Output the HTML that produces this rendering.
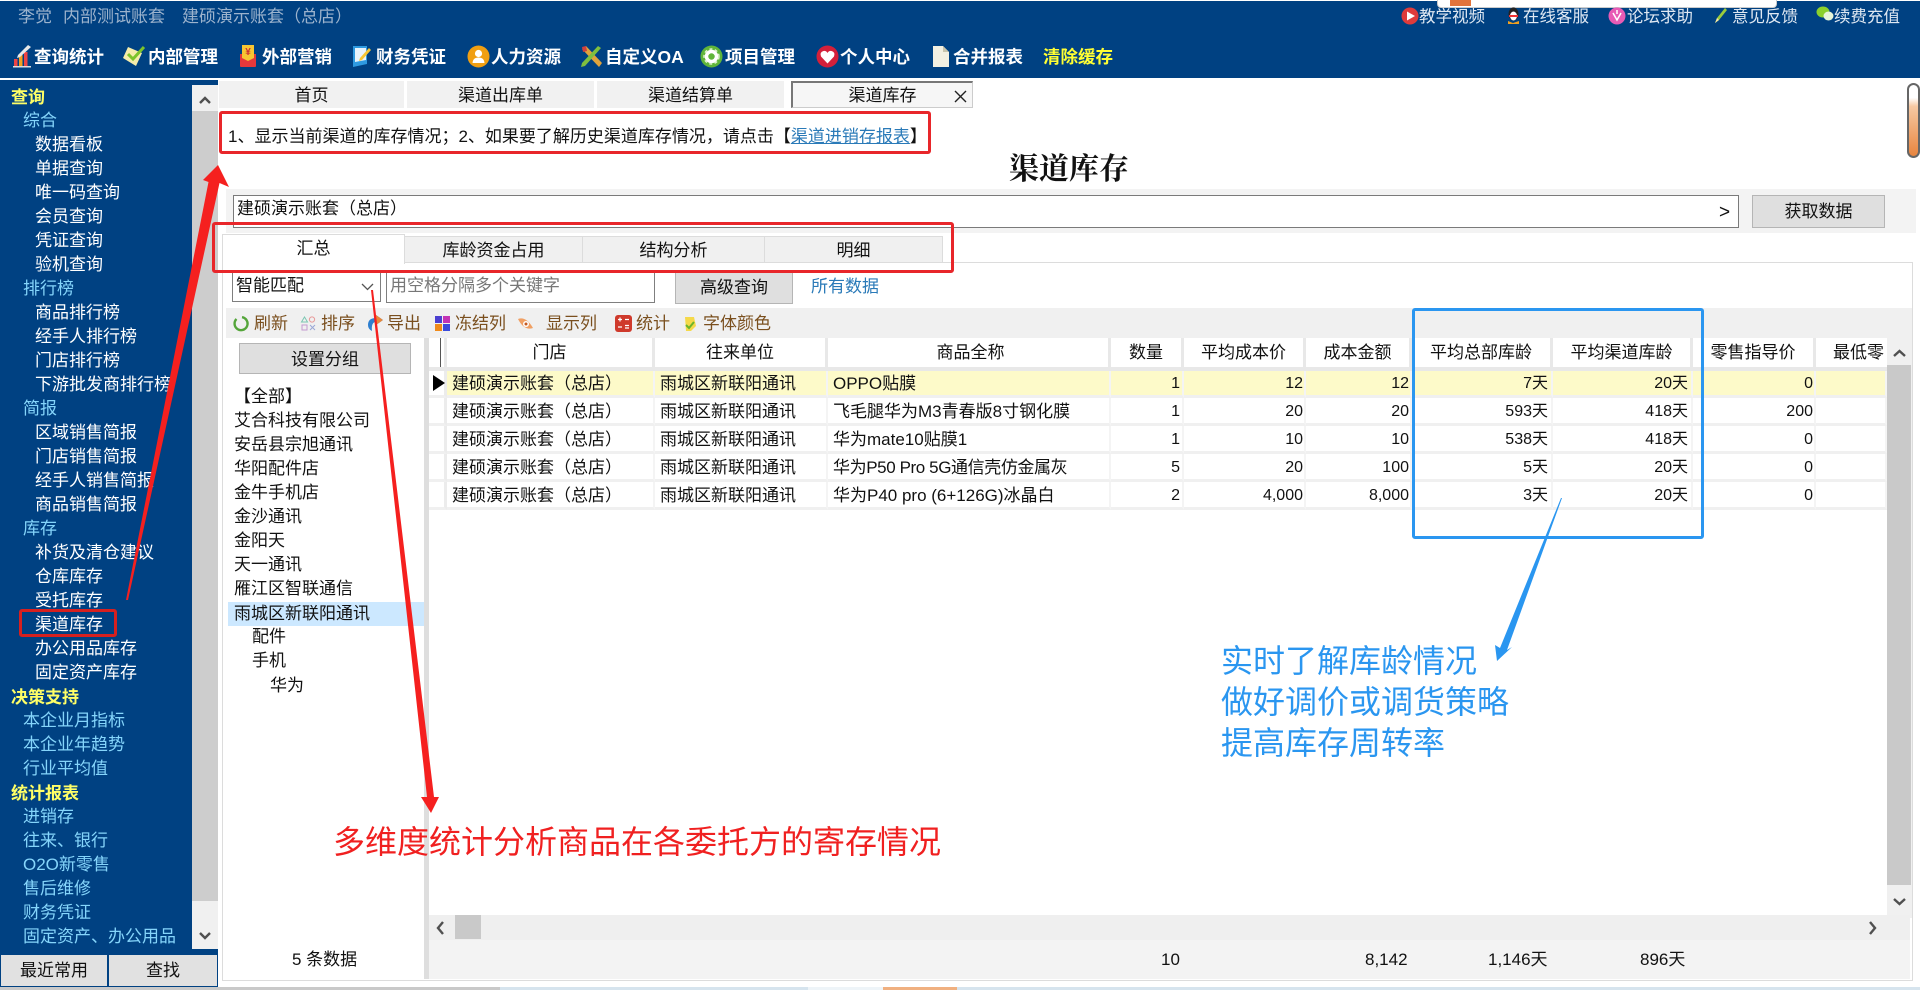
<!DOCTYPE html>
<html lang="zh-CN">
<head>
<meta charset="utf-8">
<title>渠道库存</title>
<style>
*{box-sizing:border-box;margin:0;padding:0}
html,body{width:1920px;height:990px;overflow:hidden;background:#fff}
body{position:relative;font-family:"Liberation Sans","Noto Sans CJK SC",sans-serif;font-size:17px;color:#111}
.a{position:absolute}
.t{position:absolute;white-space:nowrap;line-height:24px;height:24px}
.c{text-align:center}
svg.i{position:absolute;overflow:visible}
#side{position:absolute;left:0;top:85px;width:192px;color:#fff;line-height:24px;white-space:nowrap}
#side div{height:24px;padding-left:35px}
#side .l1{padding-left:11px;color:#ffff66;font-weight:700;position:relative;top:1px}
#side .l2{padding-left:23px;color:#85d5fb}
.nav{color:#fff;font-weight:700;top:45px;font-size:17.5px}
.tr{color:#dfe8f2;top:5px;font-size:16.5px}
.tab{position:absolute;top:81px;height:27px;background:#f1f1f1;text-align:center;line-height:29px}
.tb2{position:absolute;top:236px;height:27px;background:#f0f0f0;border:1px solid #dcdcdc;border-left:0;text-align:center;line-height:28px}
.bn{position:absolute;background:#dfdfdf;border:1px solid #b5b5b5;text-align:center}
.tool{color:#7a4f1e;top:312px}
.g{left:234px}
table{position:absolute;left:429px;top:338px;width:1458px;border-collapse:separate;border-spacing:0;table-layout:fixed;font-size:17px}
th{font-weight:400;height:33px;background:#fff;border-bottom:4px solid #e8e8e8;border-right:3px solid #e8e8e8;padding:0;text-align:center;line-height:26px;white-space:nowrap;overflow:hidden}
td{height:28px;border-bottom:3px solid #f0f0f0;border-right:2px solid #f4f4f4;padding:2px 4px 0 5px;white-space:nowrap;overflow:hidden;line-height:23px}
tr.y td{background:#fdfac9;height:27px;line-height:22px}
td.n{text-align:right;font-size:16px}
td.p2{padding-right:2px}
td.p1{padding-right:1px}
td.p3{padding-right:3px}
td.ind,tr.y td.ind{background:#fff;border-right:3px solid #ececec;padding:0}
.s{position:absolute;background:#c9c9c9}
.f{top:948px}
</style>
</head>
<body>
<!-- header -->
<div class="a" style="left:0;top:1px;width:1920px;height:77px;background:#004182"></div>
<div class="a" style="left:1437px;top:0;width:340px;height:8px;background:#fff;border:1px solid #ccc;border-top:0;border-radius:0 0 4px 4px"></div>
<div class="a" style="left:1450px;top:0;width:21px;height:6px;background:#e2733a"></div>
<div class="t" style="left:18px;top:5px;color:#9cb3cd">李觉</div>
<div class="t" style="left:63px;top:5px;color:#9cb3cd">内部测试账套</div>
<div class="t" style="left:182px;top:5px;color:#9cb3cd">建硕演示账套（总店）</div>

<!-- top right -->
<svg class="i" style="left:1401px;top:7px" width="18" height="20" viewBox="0 0 18 20"><circle cx="9" cy="9" r="8.5" fill="#df3b3b"/><path d="M6 4.500L14 9L6 13.500Z" fill="#fff"/></svg>
<div class="t tr" style="left:1419px">教学视频</div>
<svg class="i" style="left:1506px;top:6px" width="15" height="20" viewBox="0 0 15 20"><ellipse cx="7.500" cy="8" rx="5" ry="6.500" fill="#222"/><ellipse cx="7.500" cy="10" rx="3.500" ry="4.500" fill="#fff"/><path d="M3 9L12 9L12 11L3 11Z" fill="#e33"/><path d="M2 15L7 17L13 15L13 18L2 18Z" fill="#f0a020"/></svg>
<div class="t tr" style="left:1523px">在线客服</div>
<svg class="i" style="left:1608px;top:7px" width="18" height="18" viewBox="0 0 18 18"><circle cx="9" cy="9" r="8.500" fill="#e85bb5"/><path d="M5 6L9 13L13 6M9 3V7" stroke="#fff" stroke-width="1.500" fill="none"/></svg>
<div class="t tr" style="left:1627px">论坛求助</div>
<svg class="i" style="left:1714px;top:7px" width="14" height="18" viewBox="0 0 14 18"><path d="M11 1L13 3L5 13L1 16L3 11Z" fill="#9bcb3c"/><path d="M1 16L3 11L5 13Z" fill="#f5e6a8"/></svg>
<div class="t tr" style="left:1732px">意见反馈</div>
<svg class="i" style="left:1816px;top:6px" width="18" height="16" viewBox="0 0 18 16"><ellipse cx="7" cy="6" rx="6.500" ry="5.500" fill="#8bd02c"/><ellipse cx="12.500" cy="10" rx="5" ry="4.500" fill="#e8f5d8"/></svg>
<div class="t tr" style="left:1834px">续费充值</div>

<!-- nav -->
<svg class="i" style="left:12px;top:44px" width="20" height="24" viewBox="0 0 20 24"><path d="M1 22H19V23.500H1Z" fill="#ddd"/><rect x="2" y="15" width="3.500" height="7" fill="#e44"/><rect x="7" y="11" width="3.500" height="11" fill="#f4a020"/><rect x="12" y="8" width="3.500" height="14" fill="#e44"/><path d="M16 1L19 3L8 13L5 14L6 11Z" fill="#e8e8e8"/></svg>
<div class="t nav" style="left:34px">查询统计</div>
<svg class="i" style="left:122px;top:45px" width="24" height="22" viewBox="0 0 24 22"><path d="M6 2L20 8L14 21L1 13Z" fill="#f5ecaa"/><path d="M6 9L11 14L22 2" stroke="#7cc42a" stroke-width="3" fill="none"/></svg>
<div class="t nav" style="left:148px">内部管理</div>
<svg class="i" style="left:238px;top:44px" width="20" height="24" viewBox="0 0 20 24"><path d="M2 10H18V22Q18 23 17 23H3Q2 23 2 22Z" fill="#e5383b"/><path d="M4 1H16V14L10 17L4 14Z" fill="#f8c632"/><text x="10" y="11" font-size="10" text-anchor="middle" fill="#c33" font-weight="700">¥</text></svg>
<div class="t nav" style="left:262px">外部营销</div>
<svg class="i" style="left:352px;top:45px" width="20" height="23" viewBox="0 0 20 23"><path d="M1 1H15V19L1 22Z" fill="#2f9ae0"/><path d="M3 3H14V15L3 17Z" fill="#e8f3fb"/><path d="M17 3L19 5L10 15L7 16L8 13Z" fill="#f6c533"/></svg>
<div class="t nav" style="left:376px">财务凭证</div>
<svg class="i" style="left:467px;top:45px" width="23" height="23" viewBox="0 0 23 23"><circle cx="11.500" cy="11.500" r="11" fill="#f09f12"/><circle cx="11.500" cy="8.500" r="3.600" fill="#fff"/><path d="M5.500 18Q6 12.500 11.500 12.500Q17 12.500 17.500 18Z" fill="#fff"/></svg>
<div class="t nav" style="left:491px">人力资源</div>
<svg class="i" style="left:580px;top:45px" width="23" height="23" viewBox="0 0 23 23"><path d="M2 4L6 1L22 18L19 22Z" fill="#e0a33c"/><path d="M21 3L18 1L2 18L1 22L5 21Z" fill="#7fbf3f"/><path d="M2 2L6 1L7 6L3 7Z" fill="#cf3f3f"/></svg>
<div class="t nav" style="left:605px">自定义OA</div>
<svg class="i" style="left:700px;top:45px" width="23" height="23" viewBox="0 0 23 23"><circle cx="11.500" cy="11.500" r="11" fill="#5fb53a"/><circle cx="11.500" cy="11.500" r="5" fill="none" stroke="#fff" stroke-width="3.500"/><circle cx="11.500" cy="11.500" r="7.500" fill="none" stroke="#dff3cf" stroke-width="1.500" stroke-dasharray="3 2.500"/></svg>
<div class="t nav" style="left:725px">项目管理</div>
<svg class="i" style="left:816px;top:45px" width="23" height="23" viewBox="0 0 23 23"><circle cx="11.500" cy="11.500" r="11" fill="#d4203a"/><path d="M11.500 18.500L5 11.500Q3.500 7 7.500 6Q10 5.500 11.500 8Q13 5.500 15.500 6Q19.500 7 18 11.500Z" fill="#fff"/></svg>
<div class="t nav" style="left:840px">个人中心</div>
<svg class="i" style="left:931px;top:45px" width="19" height="23" viewBox="0 0 19 23"><path d="M2 1H12L18 7V22H2Z" fill="#f3f0e2"/><path d="M12 1V7H18Z" fill="#c9c5ad"/></svg>
<div class="t nav" style="left:953px">合并报表</div>
<div class="t nav" style="left:1043px;color:#ffff33">清除缓存</div>

<!-- sidebar -->
<div class="a" style="left:0;top:80px;width:218px;height:907px;background:#004182"></div>
<div class="a" style="left:192px;top:85px;width:26px;height:864px;background:#cdcdcd"></div>
<div class="a" style="left:192px;top:85px;width:26px;height:26px;background:#f0f0f0"></div>
<div class="a" style="left:192px;top:901px;width:26px;height:48px;background:#f0f0f0"></div>
<svg class="i" style="left:199px;top:96px" width="12" height="8"><path d="M1 7L6 2L11 7" fill="none" stroke="#505050" stroke-width="2.400"/></svg>
<svg class="i" style="left:199px;top:932px" width="12" height="8"><path d="M1 1L6 6L11 1" fill="none" stroke="#505050" stroke-width="2.400"/></svg>
<div id="side">
<div class="l1">查询</div>
<div class="l2">综合</div>
<div>数据看板</div><div>单据查询</div><div>唯一码查询</div><div>会员查询</div><div>凭证查询</div><div>验机查询</div>
<div class="l2">排行榜</div>
<div>商品排行榜</div><div>经手人排行榜</div><div>门店排行榜</div><div>下游批发商排行榜</div>
<div class="l2">简报</div>
<div>区域销售简报</div><div>门店销售简报</div><div>经手人销售简报</div><div>商品销售简报</div>
<div class="l2">库存</div>
<div>补货及清仓建议</div><div>仓库库存</div><div>受托库存</div><div>渠道库存</div><div>办公用品库存</div><div>固定资产库存</div>
<div class="l1">决策支持</div>
<div class="l2">本企业月指标</div><div class="l2">本企业年趋势</div><div class="l2">行业平均值</div>
<div class="l1">统计报表</div>
<div class="l2">进销存</div><div class="l2">往来、银行</div><div class="l2">O2O新零售</div><div class="l2">售后维修</div><div class="l2">财务凭证</div><div class="l2">固定资产、办公用品</div>
</div>
<div class="a c" style="left:1px;top:955px;width:106px;height:31px;background:#e1e1e1;line-height:31px">最近常用</div>
<div class="a c" style="left:109px;top:955px;width:108px;height:31px;background:#e1e1e1;line-height:31px">查找</div>

<!-- page tabs -->
<div class="tab" style="left:219px;width:185px">首页</div>
<div class="tab" style="left:407px;width:187px">渠道出库单</div>
<div class="tab" style="left:597px;width:187px">渠道结算单</div>
<div class="tab" style="left:791px;width:182px;background:#f6f6f6;border-top:2px solid #777;border-left:2px solid #777;border-right:1px solid #ccc;border-bottom:1px solid #ccc;line-height:26px">渠道库存</div>
<svg class="i" style="left:954px;top:90px" width="13" height="13"><path d="M1 1L12 12M12 1L1 12" stroke="#222" stroke-width="1.400"/></svg>

<!-- hint -->
<div class="t" style="left:228px;top:125px">1、显示当前渠道的库存情况；2、如果要了解历史渠道库存情况，请点击【<span style="color:#2a7ab8;text-decoration:underline">渠道进销存报表</span>】</div>
<div class="t c" style="left:900px;top:151px;width:338px;height:38px;line-height:38px;font-family:'Liberation Serif','Noto Serif CJK SC',serif;font-size:30px;font-weight:700;color:#111">渠道库存</div>

<!-- account bar -->
<div class="a" style="left:226px;top:189px;width:1690px;height:44px;background:#f3f3f3"></div>
<div class="a" style="left:233px;top:195px;width:1506px;height:33px;background:#fff;border:1px solid #7a7a7a"></div>
<div class="t" style="left:237px;top:197px">建硕演示账套（总店）</div>
<div class="t" style="left:1719px;top:201px;font-size:19px">&gt;</div>
<div class="bn" style="left:1752px;top:195px;width:133px;height:33px;line-height:31px">获取数据</div>

<!-- panel -->
<div class="a" style="left:222px;top:262px;width:1691px;height:719px;border:1px solid #dcdcdc;background:#fff"></div>
<div class="a c" style="left:222px;top:234px;width:183px;height:30px;background:#fff;border:1px solid #dcdcdc;border-bottom:0;line-height:28px">汇总</div>
<div class="tb2" style="left:405px;width:178px">库龄资金占用</div>
<div class="tb2" style="left:583px;width:182px">结构分析</div>
<div class="tb2" style="left:765px;width:178px">明细</div>

<!-- filter -->
<div class="a" style="left:232px;top:272px;width:149px;height:30px;border:1px solid #7f7f7f;background:#fff"></div>
<div class="t" style="left:236px;top:274px">智能匹配</div>
<svg class="i" style="left:361px;top:283px" width="13" height="8"><path d="M1 1L6.500 6.500L12 1" fill="none" stroke="#555" stroke-width="1.300"/></svg>
<div class="a" style="left:386px;top:272px;width:269px;height:31px;border:1px solid #7f7f7f;background:#fff"></div>
<div class="t" style="left:390px;top:274px;color:#777">用空格分隔多个关键字</div>
<div class="bn" style="left:675px;top:270px;width:118px;height:34px;line-height:34px">高级查询</div>
<div class="t" style="left:811px;top:275px;color:#2a7ab8">所有数据</div>

<!-- toolbar -->
<div class="a" style="left:226px;top:308px;width:1686px;height:30px;background:#f0f0f0"></div>
<svg class="i" style="left:233px;top:315px" width="16" height="17" viewBox="0 0 16 17"><path d="M9 2.200A6.500 6.500 0 1 1 3.500 4" fill="none" stroke="#54a53a" stroke-width="2.400"/></svg>
<div class="t tool" style="left:254px">刷新</div>
<svg class="i" style="left:301px;top:316px" width="15" height="15" viewBox="0 0 15 15"><path d="M3.500 1L6.500 6H.5Z" fill="none" stroke="#7cc6b2"/><circle cx="11" cy="3.500" r="2.600" fill="none" stroke="#e89a9a"/><rect x="1" y="9" width="5" height="5" fill="none" stroke="#c39ad0"/><path d="M9 9L14 14M14 9L9 14" stroke="#9aa7d6"/></svg>
<div class="t tool" style="left:321px">排序</div>
<svg class="i" style="left:367px;top:315px" width="16" height="17" viewBox="0 0 16 17"><path d="M1 10Q1 3 9 3V0L16 5L9 10V7Q4 7 5 16Q1 14 1 10Z" fill="#2e7fd0"/><path d="M9 0L16 5L9 10Z" fill="#e8883a"/></svg>
<div class="t tool" style="left:387px">导出</div>
<svg class="i" style="left:435px;top:316px" width="15" height="15"><rect width="7" height="7" fill="#4b3fd0"/><rect x="8" width="7" height="7" fill="#c233b5"/><rect y="8" width="7" height="7" fill="#f08a1a"/><rect x="8" y="8" width="7" height="7" fill="#3a4bdc"/></svg>
<div class="t tool" style="left:455px">冻结列</div>
<svg class="i" style="left:518px;top:316px" width="16" height="15" viewBox="0 0 16 15"><path d="M0 3Q8 0 15 12Q6 15 0 3Z" fill="#f0a064"/><circle cx="8" cy="8" r="3" fill="#fff"/><circle cx="8" cy="8" r="1.500" fill="#c55a22"/></svg>
<div class="t tool" style="left:546px">显示列</div>
<svg class="i" style="left:615px;top:315px" width="17" height="17"><rect width="17" height="17" rx="3" fill="#cf3a2c"/><path d="M3 4.500H7M5 2.500V6.500M10 4.500H14M3 12H7M10 10.500H14M10 13H14" stroke="#fff" stroke-width="1.200"/></svg>
<div class="t tool" style="left:636px">统计</div>
<svg class="i" style="left:683px;top:316px" width="14" height="16" viewBox="0 0 14 16"><path d="M2 1H11L13 10L8 15H3Z" fill="#f5d94a"/><path d="M3 9L6 12L11 6" stroke="#6bb52c" stroke-width="2" fill="none"/></svg>
<div class="t tool" style="left:703px">字体颜色</div>

<!-- group list -->
<div class="bn" style="left:239px;top:343px;width:172px;height:31px;line-height:31px">设置分组</div>
<div class="a" style="left:228px;top:602px;width:196px;height:24px;background:#cce8ff"></div>
<div class="t" style="left:234px;top:385px">【全部】</div>
<div class="t g" style="top:409px">艾合科技有限公司</div>
<div class="t g" style="top:433px">安岳县宗旭通讯</div>
<div class="t g" style="top:457px">华阳配件店</div>
<div class="t g" style="top:481px">金牛手机店</div>
<div class="t g" style="top:505px">金沙通讯</div>
<div class="t g" style="top:529px">金阳天</div>
<div class="t g" style="top:553px">天一通讯</div>
<div class="t g" style="top:577px">雁江区智联通信</div>
<div class="t g" style="top:602px">雨城区新联阳通讯</div>
<div class="t" style="left:252px;top:625px">配件</div>
<div class="t" style="left:252px;top:649px">手机</div>
<div class="t" style="left:270px;top:674px">华为</div>
<div class="t" style="left:292px;top:948px">5 条数据</div>
<div class="a" style="left:424px;top:338px;width:5px;height:641px;background:#dedede"></div>

<!-- grid -->
<table>
<colgroup><col style="width:18px"><col style="width:208px"><col style="width:173px"><col style="width:283px"><col style="width:73px"><col style="width:122px"><col style="width:106px"><col style="width:141px"><col style="width:140px"><col style="width:123px"><col style="width:71px"></colgroup>
<tr><th></th><th>门店</th><th>往来单位</th><th style="padding-left:5px">商品全称</th><th>数量</th><th>平均成本价</th><th>成本金额</th><th>平均总部库龄</th><th>平均渠道库龄</th><th>零售指导价</th><th style="text-align:left;padding-left:17px;border-right:0">最低零</th></tr>
<tr class="y"><td class="ind"></td><td>建硕演示账套（总店）</td><td>雨城区新联阳通讯</td><td>OPPO贴膜</td><td class="n p2">1</td><td class="n p1">12</td><td class="n p1">12</td><td class="n p3">7天</td><td class="n p3">20天</td><td class="n p1">0</td><td></td></tr>
<tr><td class="ind"></td><td>建硕演示账套（总店）</td><td>雨城区新联阳通讯</td><td>飞毛腿华为M3青春版8寸钢化膜</td><td class="n p2">1</td><td class="n p1">20</td><td class="n p1">20</td><td class="n p3">593天</td><td class="n p3">418天</td><td class="n p1">200</td><td></td></tr>
<tr><td class="ind"></td><td>建硕演示账套（总店）</td><td>雨城区新联阳通讯</td><td>华为mate10贴膜1</td><td class="n p2">1</td><td class="n p1">10</td><td class="n p1">10</td><td class="n p3">538天</td><td class="n p3">418天</td><td class="n p1">0</td><td></td></tr>
<tr><td class="ind"></td><td>建硕演示账套（总店）</td><td>雨城区新联阳通讯</td><td><span style="letter-spacing:-.4px">华为P50 Pro 5G通信壳仿金属灰</span></td><td class="n p2">5</td><td class="n p1">20</td><td class="n p1">100</td><td class="n p3">5天</td><td class="n p3">20天</td><td class="n p1">0</td><td></td></tr>
<tr><td class="ind"></td><td>建硕演示账套（总店）</td><td>雨城区新联阳通讯</td><td>华为P40 pro (6+126G)冰晶白</td><td class="n p2">2</td><td class="n p1">4,000</td><td class="n p1">8,000</td><td class="n p3">3天</td><td class="n p3">20天</td><td class="n p1">0</td><td></td></tr>
</table>
<div class="a" style="left:440px;top:338px;width:1px;height:29px;background:#555"></div>
<svg class="i" style="left:432px;top:375px" width="14" height="16"><path d="M1 0L13 8L1 16Z" fill="#000"/></svg>

<!-- scrollbars -->
<div class="a" style="left:1887px;top:338px;width:25px;height:580px;background:#f0f0f0"></div>
<div class="s" style="left:1887px;top:365px;width:24px;height:520px"></div>
<svg class="i" style="left:1893px;top:349px" width="13" height="8"><path d="M1 7L6.500 2L12 7" fill="none" stroke="#505050" stroke-width="2.400"/></svg>
<svg class="i" style="left:1893px;top:898px" width="13" height="8"><path d="M1 1L6.500 6L12 1" fill="none" stroke="#505050" stroke-width="2.400"/></svg>
<div class="a" style="left:429px;top:915px;width:1481px;height:25px;background:#efefef"></div>
<div class="s" style="left:455px;top:915px;width:26px;height:24px"></div>
<svg class="i" style="left:436px;top:921px" width="9" height="14"><path d="M7 1L2 7L7 13" fill="none" stroke="#505050" stroke-width="2.400"/></svg>
<svg class="i" style="left:1868px;top:921px" width="9" height="14"><path d="M2 1L7 7L2 13" fill="none" stroke="#505050" stroke-width="2.400"/></svg>
<div class="a" style="left:429px;top:940px;width:1481px;height:39px;background:#f3f3f3"></div>
<div class="t f" style="left:1161px">10</div>
<div class="t f" style="left:1365px">8,142</div>
<div class="t f" style="left:1488px">1,146天</div>
<div class="t f" style="left:1640px">896天</div>
<div class="a" style="left:1907px;top:83px;width:13px;height:75px;border:2px solid #666;border-radius:7px;background:linear-gradient(#fff 0,#fff 18%,#f6c9a3 30%,#e8853f 100%)"></div>

<!-- bottom strip -->
<div class="a" style="left:0;top:987px;width:1920px;height:3px;background:#d6e4ee"></div>
<div class="a" style="left:0;top:987px;width:500px;height:3px;background:#c9c9c9"></div>
<div class="a" style="left:808px;top:987px;width:75px;height:3px;background:#eef4f8"></div>
<div class="a" style="left:883px;top:987px;width:74px;height:3px;background:#f0b080"></div>

<!-- annotations -->
<div class="a" style="left:219px;top:111px;width:712px;height:43px;border:3px solid #e8262a;border-radius:3px"></div>
<div class="a" style="left:212px;top:222px;width:742px;height:51px;border:3px solid #e8262a;border-radius:3px"></div>
<div class="a" style="left:19px;top:609px;width:98px;height:28px;border:3px solid #d6201f;border-radius:3px"></div>
<div class="a" style="left:1412px;top:308px;width:292px;height:231px;border:3px solid #2a96f0;border-radius:3px"></div>
<svg class="i" style="left:0;top:0;pointer-events:none" width="1920" height="990">
<path d="M218 165L229 187L219.500 183L128 600L126 600L208.500 182L203 180Z" fill="#f5201f"/>
<path d="M371 290L373 290L434 797L439 797L431 813L421 797L427 797Z" fill="#f5201f"/>
<path d="M1561 498L1562 498L1507 650L1512 647L1497 661L1495 645L1500 648Z" fill="#2a96f0"/>
</svg>
<div class="t" style="left:333px;top:822px;height:40px;line-height:40px;font-size:32px;color:#f02020">多维度统计分析商品在各委托方的寄存情况</div>
<div class="t" style="left:1221px;top:641px;height:40px;line-height:40px;font-size:32px;color:#2a96f0">实时了解库龄情况</div>
<div class="t" style="left:1221px;top:682px;height:40px;line-height:40px;font-size:32px;color:#2a96f0">做好调价或调货策略</div>
<div class="t" style="left:1221px;top:723px;height:40px;line-height:40px;font-size:32px;color:#2a96f0">提高库存周转率</div>
</body>
</html>
